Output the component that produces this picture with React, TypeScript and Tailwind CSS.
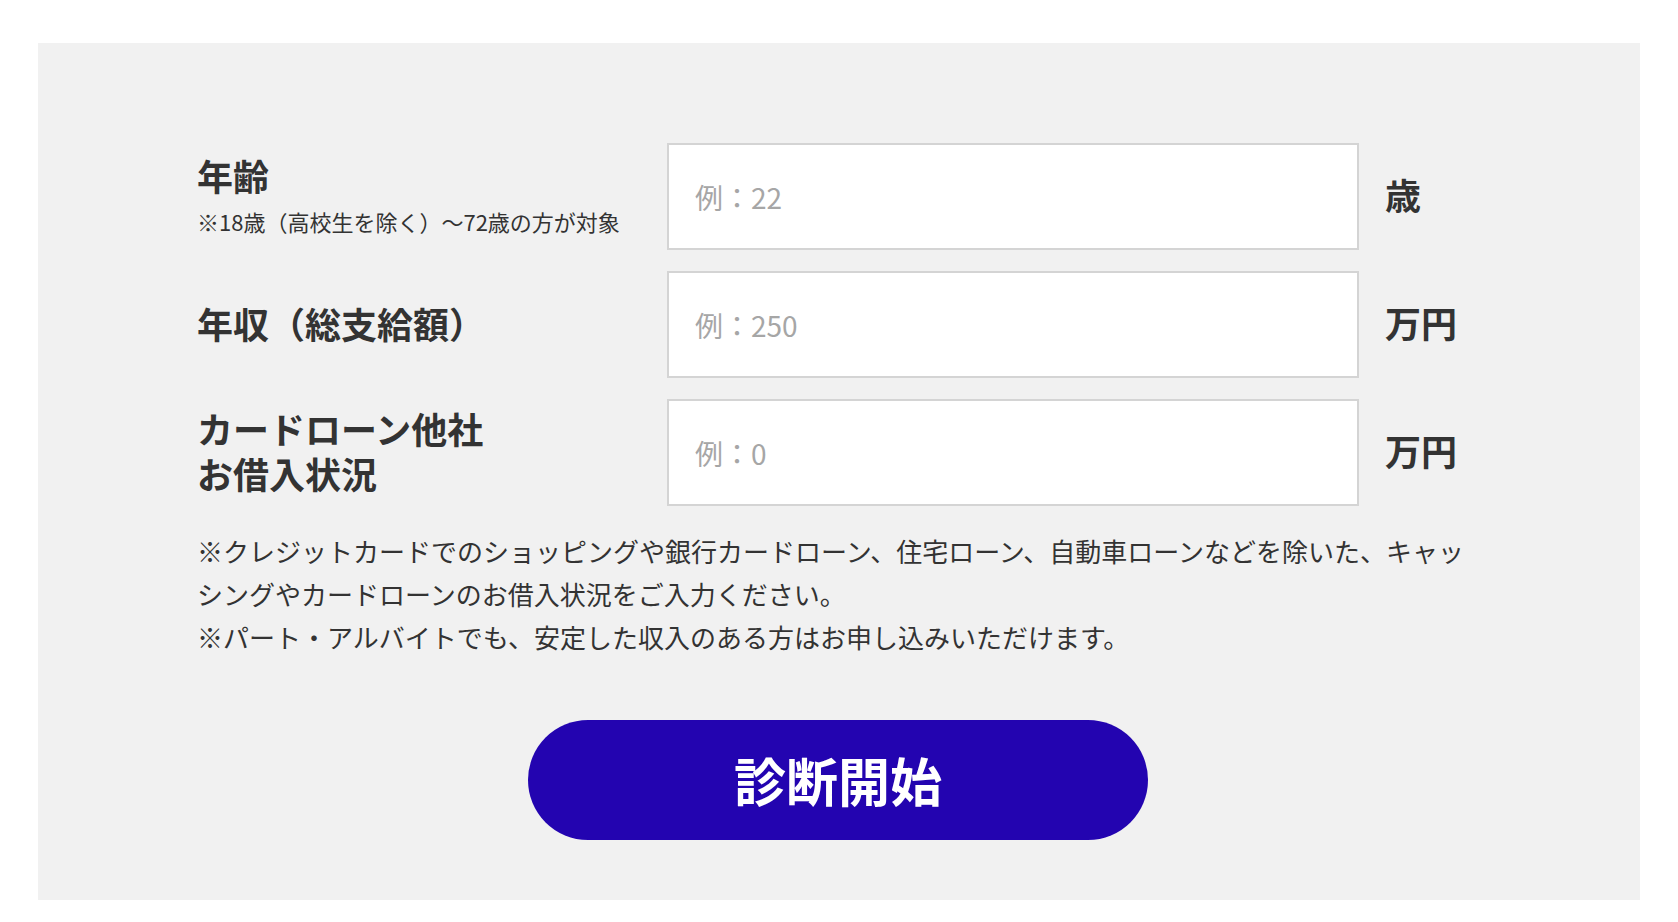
import React from "react";

interface FieldRowProps {
  label: React.ReactNode;
  note?: string;
  placeholder: string;
  unit: string;
}

function FieldRow({ label, note, placeholder, unit }: FieldRowProps) {
  return (
    <>
      <div className="flex flex-col justify-center pb-[3px]">
        <div className="text-[36px] font-bold leading-[45px] text-[#333333]">{label}</div>
        {note && <p className="mt-[7px] text-[22px] leading-[32px] text-[#333333]">{note}</p>}
      </div>
      <input
        type="text"
        placeholder={placeholder}
        className="h-[107px] w-full border-2 border-[#d4d4d4] bg-white pl-[26px] text-[28px] text-[#333333] outline-none placeholder:text-[#a6a6a6]"
      />
      <div className="flex items-center pb-[5px] pl-[26px] text-[36px] font-bold text-[#333333]">{unit}</div>
    </>
  );
}

export default function App() {
  return (
    <div className="min-h-[922px] bg-white pt-[43px] font-['Noto_Sans_CJK_JP','Noto_Sans',sans-serif]">
      <section className="mx-auto flex w-[1602px] flex-col items-center bg-[#f1f1f1] pr-[161px] pl-[159px] pt-[100px] pb-[60px]">
        <div className="w-[1282px]">
          <div className="grid grid-cols-[470px_692px_1fr] gap-y-[21px]">
            <FieldRow
              label="年齢"
              note="※18歳（高校生を除く）〜72歳の方が対象"
              placeholder="例：22"
              unit="歳"
            />
            <FieldRow label="年収（総支給額）" placeholder="例：250" unit="万円" />
            <FieldRow
              label={
                <>
                  カードローン他社
                  <br />
                  お借入状況
                </>
              }
              placeholder="例：0"
              unit="万円"
            />
          </div>
          <div className="mt-[23px] whitespace-nowrap text-[26px] leading-[43px] text-[#333333]">
            <p>
              ※クレジットカードでのショッピングや銀行カードローン、住宅ローン、自動車ローンなどを除いた、キャッ
              <br />
              シングやカードローンのお借入状況をご入力ください。
            </p>
            <p>※パート・アルバイトでも、安定した収入のある方はお申し込みいただけます。</p>
          </div>
        </div>
        <button
          type="button"
          className="mt-[62px] h-[120px] w-[620px] rounded-full bg-[#2304b0] text-[52px] font-bold text-white"
        >
          診断開始
        </button>
      </section>
    </div>
  );
}
